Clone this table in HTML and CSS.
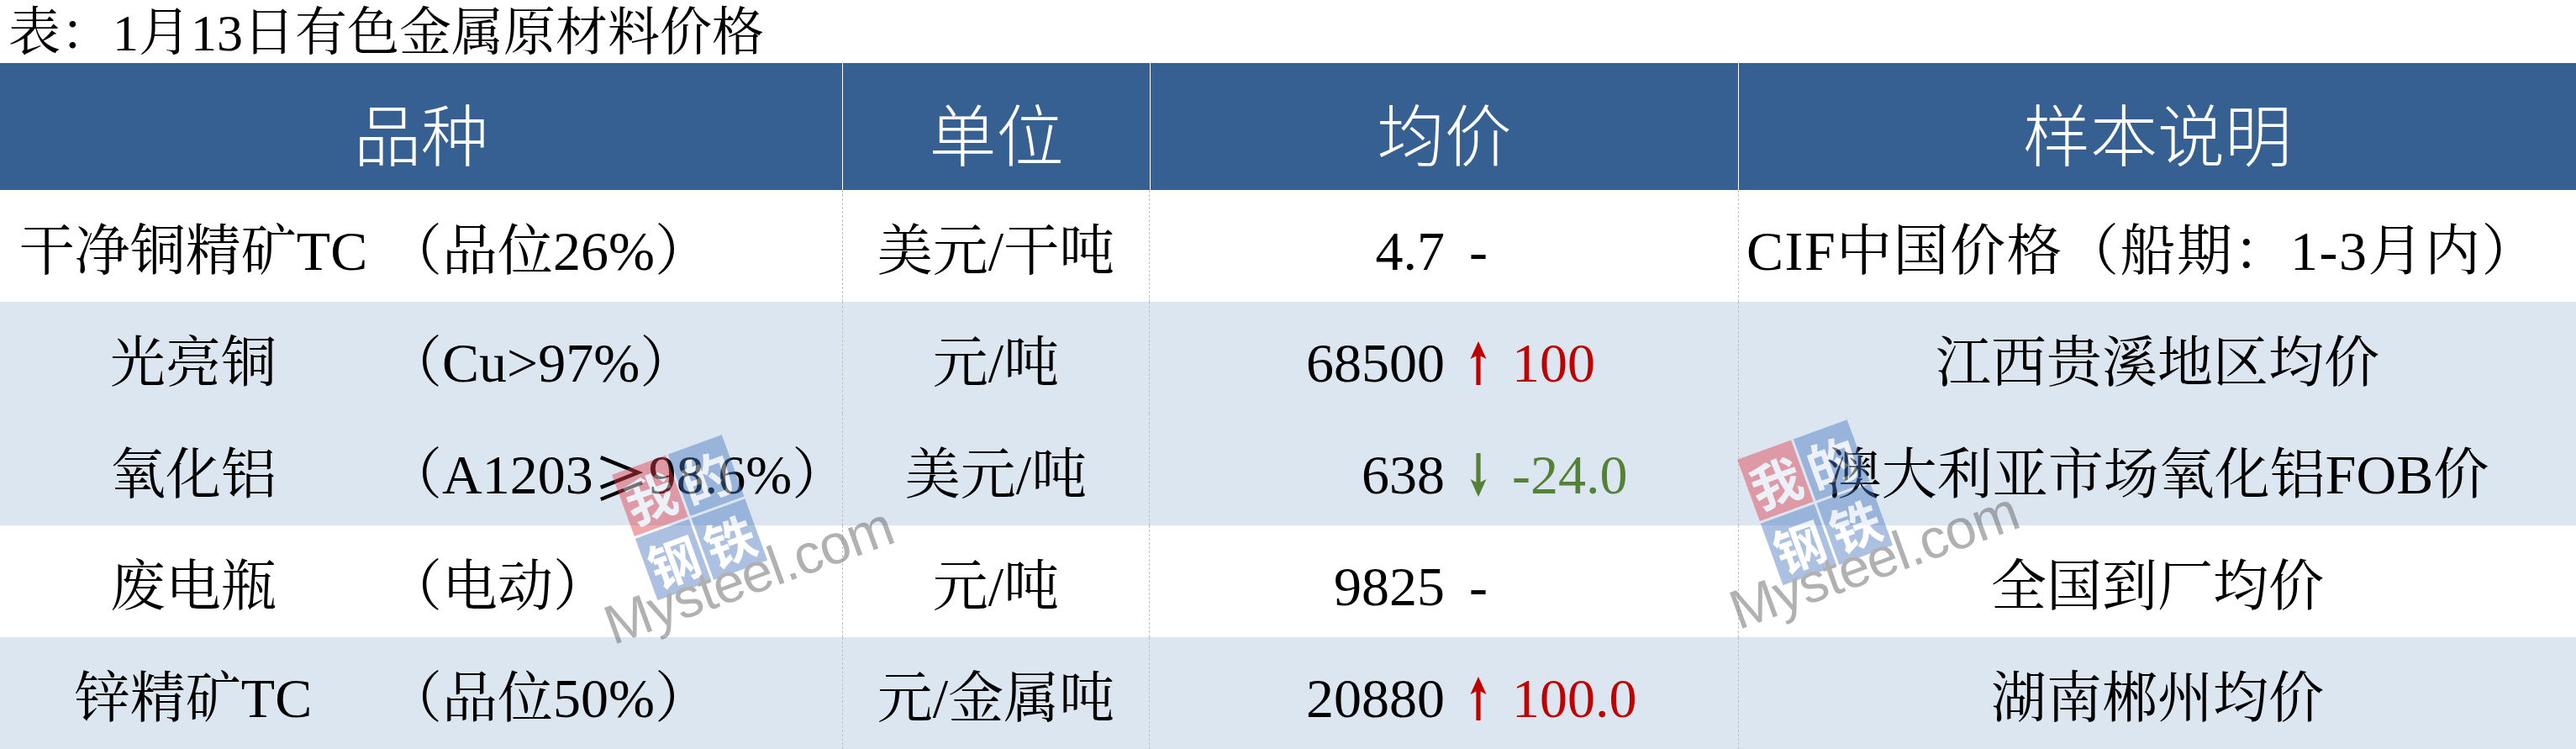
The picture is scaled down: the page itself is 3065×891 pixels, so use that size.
FILE: index.html
```html
<!DOCTYPE html>
<html lang="zh-CN">
<head>
<meta charset="utf-8">
<title>1月13日有色金属原材料价格</title>
<link rel="stylesheet" href="styles.css">
</head>
<body>
<div class="page">
  <h1 class="title">表：1月13日有色金属原材料价格</h1>
  <div class="table">
    <div class="head">
      <div class="hcell">品种</div>
      <div class="hcell">单位</div>
      <div class="hcell">均价</div>
      <div class="hcell">样本说明</div>
    </div>

    <div class="row">
      <div class="c name">干净铜精矿TC</div>
      <div class="c spec">（品位26%）</div>
      <div class="c unit">美元/干吨</div>
      <div class="c price">4.7</div>
      <div class="c trend">-</div>
      <div class="c change"></div>
      <div class="c note note-wide">CIF中国价格（船期：1-3月内）</div>
    </div>

    <div class="row alt">
      <div class="c name">光亮铜</div>
      <div class="c spec">（Cu&gt;97%）</div>
      <div class="c unit">元/吨</div>
      <div class="c price">68500</div>
      <div class="c trend"><svg class="arrow" viewBox="0 0 22 52" width="22" height="52"><path d="M11 0 L20.5 21 L13.6 17.5 L13.6 52 L8.4 52 L8.4 17.5 L1.5 21 Z" fill="#c00000"/></svg></div>
      <div class="c change up">100</div>
      <div class="c note">江西贵溪地区均价</div>
    </div>

    <div class="row alt">
      <div class="c name">氧化铝</div>
      <div class="c spec">（A1203<span class="cjk">≥</span>98.6%）</div>
      <div class="c unit">美元/吨</div>
      <div class="c price">638</div>
      <div class="c trend"><svg class="arrow" viewBox="0 0 22 52" width="22" height="52"><path d="M11 52 L20.5 31 L13.6 34.5 L13.6 0 L8.4 0 L8.4 34.5 L1.5 31 Z" fill="#538135"/></svg></div>
      <div class="c change down">-24.0</div>
      <div class="c note">澳大利亚市场氧化铝FOB价</div>
    </div>

    <div class="row">
      <div class="c name">废电瓶</div>
      <div class="c spec">（电动）</div>
      <div class="c unit">元/吨</div>
      <div class="c price">9825</div>
      <div class="c trend">-</div>
      <div class="c change"></div>
      <div class="c note">全国到厂均价</div>
    </div>

    <div class="row alt">
      <div class="c name">锌精矿TC</div>
      <div class="c spec">（品位50%）</div>
      <div class="c unit">元/金属吨</div>
      <div class="c price">20880</div>
      <div class="c trend"><svg class="arrow" viewBox="0 0 22 52" width="22" height="52"><path d="M11 0 L20.5 21 L13.6 17.5 L13.6 52 L8.4 52 L8.4 17.5 L1.5 21 Z" fill="#c00000"/></svg></div>
      <div class="c change up">100.0</div>
      <div class="c note">湖南郴州均价</div>
    </div>
  </div>

  <div class="wm wm-a" aria-hidden="true">
    <div class="wm-logo">
      <span class="wm-sq wm-red">我</span><span class="wm-sq">的</span><span class="wm-sq">钢</span><span class="wm-sq">铁</span>
    </div>
    <div class="wm-text">Mysteel.com</div>
  </div>
  <div class="wm wm-b" aria-hidden="true">
    <div class="wm-logo">
      <span class="wm-sq wm-red">我</span><span class="wm-sq">的</span><span class="wm-sq">钢</span><span class="wm-sq">铁</span>
    </div>
    <div class="wm-text">Mysteel.com</div>
  </div>
</div>
</body>
</html>
```

FILE: styles.css
```css
* {
  box-sizing: border-box;
  margin: 0;
  padding: 0;
}

html,
body {
  background: #ffffff;
}

body {
  width: 3065px;
  height: 891px;
  overflow: hidden;
  font-family: "Liberation Serif", "Noto Serif CJK SC", "Noto Sans CJK SC", serif;
  color: #000000;
}

.page {
  position: relative;
  width: 3065px;
  height: 891px;
}

.title {
  height: 75px;
  padding-left: 10px;
  padding-top: 4px;
  font-size: 62px;
  font-weight: normal;
  line-height: 71px;
  white-space: nowrap;
}

.table {
  width: 3065px;
}

.head {
  display: grid;
  grid-template-columns: 1002px 366px 700px 997px;
  height: 151px;
  background: #376092;
}

.hcell {
  display: flex;
  align-items: center;
  justify-content: center;
  padding-top: 10px;
  border-left: 1px solid #ffffff;
  color: #ffffff;
  font-family: "Noto Sans CJK SC", sans-serif;
  font-weight: 300;
  font-size: 80px;
  line-height: 1;
}

.hcell:first-child {
  border-left: none;
}

.row {
  display: grid;
  grid-template-columns: 460px 542px 366px 351px 80px 269px 997px;
  height: 133px;
  font-size: 66px;
  line-height: 1;
}

.row.alt {
  background: #dce6f1;
}

.c {
  display: flex;
  align-items: center;
  padding-top: 12px;
  white-space: nowrap;
}

.name {
  justify-content: center;
}

.spec {
  justify-content: flex-start;
}

.unit {
  justify-content: center;
  border-left: 1px dashed #bfbfbf;
  border-right: 1px dashed #bfbfbf;
}

.price {
  justify-content: flex-end;
}

.trend {
  justify-content: center;
}

.change {
  justify-content: flex-start;
}

.change.up {
  color: #c00000;
}

.change.down {
  color: #538135;
}

.note {
  justify-content: center;
  border-left: 1px dashed #bfbfbf;
}

.note-wide {
  padding-right: 36px;
  letter-spacing: 1.5px;
}

.cjk {
  font-family: "Noto Sans CJK SC", sans-serif;
}

.arrow {
  display: block;
}

/* watermark overlay */
.wm {
  position: absolute;
  width: 380px;
  height: 200px;
  transform-origin: 0 185px;
  transform: rotate(-20deg);
  opacity: 0.45;
  pointer-events: none;
}

.wm-a {
  left: 734px;
  top: 583px;
}

.wm-b {
  left: 2073px;
  top: 565px;
}

.wm-logo {
  display: grid;
  grid-template-columns: 68px 68px;
  grid-template-rows: 78px 78px;
  gap: 3px;
  width: 139px;
  height: 159px;
  margin-left: 64px;
  margin-top: -8px;
}

.wm-sq {
  display: flex;
  align-items: center;
  justify-content: center;
  background: #4a78c0;
  color: #ffffff;
  font-family: "Noto Sans CJK SC", sans-serif;
  font-weight: 700;
  font-size: 60px;
  line-height: 1;
}

.wm-sq.wm-red {
  background: #e0404c;
}

.wm-text {
  margin-top: -22px;
  margin-left: -4px;
  color: #555555;
  font-family: "Liberation Sans", Arial, sans-serif;
  font-size: 66px;
  line-height: 62px;
  letter-spacing: -1px;
  white-space: nowrap;
}
```
